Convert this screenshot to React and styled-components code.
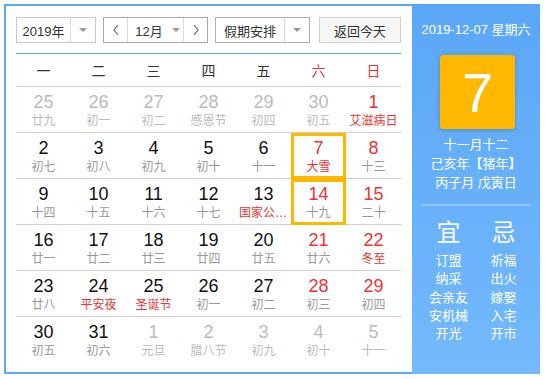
import React from "react";
import styled, { createGlobalStyle } from "styled-components";

const FONT = `"Liberation Sans", "Noto Sans CJK SC", sans-serif`;
const RED = "#ee3333";
const BLUE = "#5ca9f7";

const weekdays = ["一", "二", "三", "四", "五", "六", "日"];

// [day, lunar, other month, festival, selected]
const weeks = [
  [[25, "廿九", 1], [26, "初一", 1], [27, "初二", 1], [28, "感恩节", 1], [29, "初四", 1], [30, "初五", 1], [1, "艾滋病日", 0, 1]],
  [[2, "初七"], [3, "初八"], [4, "初九"], [5, "初十"], [6, "十一"], [7, "大雪", 0, 1, 1], [8, "十三"]],
  [[9, "十四"], [10, "十五"], [11, "十六"], [12, "十七"], [13, "国家公祭日", 0, 1], [14, "十九", 0, 0, 1], [15, "二十"]],
  [[16, "廿一"], [17, "廿二"], [18, "廿三"], [19, "廿四"], [20, "廿五"], [21, "廿六"], [22, "冬至", 0, 1]],
  [[23, "廿八"], [24, "平安夜", 0, 1], [25, "圣诞节", 0, 1], [26, "初一"], [27, "初二"], [28, "初三"], [29, "初四"]],
  [[30, "初五"], [31, "初六"], [1, "元旦", 1], [2, "腊八节", 1], [3, "初九", 1], [4, "初十", 1], [5, "十一", 1]],
];

const good = ["订盟", "纳采", "会亲友", "安机械", "开光"];
const bad = ["祈福", "出火", "嫁娶", "入宅", "开市"];

const GlobalStyle = createGlobalStyle`
  body {
    margin: 0;
    font-family: ${FONT};
    background: #fff;
  }
`;

const Frame = styled.div`
  margin: 4px;
  width: 536px;
  height: 370px;
  box-sizing: border-box;
  border: 2px solid ${BLUE};
  display: flex;
`;

const Main = styled.div`
  width: 406px;
  box-sizing: border-box;
  padding: 11px 11px 0 10px;
`;

const Toolbar = styled.div`
  display: flex;
  height: 26px;
  font-size: 13px;
  color: #333;
`;

const Select = styled.div`
  display: flex;
  width: ${(p) => p.$w}px;
  margin-right: ${(p) => p.$gap || 0}px;
  box-sizing: border-box;
  border: 1px solid ${(p) => p.$border || "#c8c8c8"};
  background: #fff;
`;

const Label = styled.div`
  flex: 1;
  display: flex;
  align-items: center;
  justify-content: center;
`;

const Arrow = styled.div`
  width: ${(p) => p.$w || 24}px;
  display: flex;
  align-items: center;
  justify-content: center;
  border-left: ${(p) => (p.$left ? "1px solid #ddd" : "none")};
  border-right: ${(p) => (p.$right ? "1px solid #ddd" : "none")};
  &::after {
    content: "";
    display: ${(p) => (p.$caret ? "block" : "none")};
    border-left: 4px solid transparent;
    border-right: 4px solid transparent;
    border-top: 4px solid #999;
  }
`;

const MonthLabel = styled(Label)`
  gap: 9px;
  padding-left: 4px;
  &::after {
    content: "";
    border-left: 4px solid transparent;
    border-right: 4px solid transparent;
    border-top: 4px solid #999;
  }
`;

const TodayButton = styled.div`
  margin-left: auto;
  width: 82px;
  box-sizing: border-box;
  border: 1px solid #d0d0d0;
  background: #f6f6f6;
  display: flex;
  align-items: center;
  justify-content: center;
`;

const Grid = styled.div`
  display: grid;
  grid-template-columns: repeat(7, 55px);
`;

const Header = styled(Grid)`
  margin-top: 10px;
  border-top: 1px solid ${BLUE};
  border-bottom: 1px solid #d0d0d0;
  height: 34px;
  box-sizing: border-box;
  padding-bottom: 1px;
`;

const Weekday = styled.div`
  display: flex;
  align-items: center;
  justify-content: center;
  font-size: 14px;
  color: ${(p) => (p.$weekend ? RED : "#333")};
`;

const Week = styled(Grid)`
  height: 46px;
  box-sizing: border-box;
  border-bottom: ${(p) => (p.$last ? "none" : "1px solid #d0d0d0")};
`;

const Day = styled.div`
  box-sizing: border-box;
  border: 3px solid ${(p) => (p.$selected ? "#ffb800" : "transparent")};
  padding-top: 2px;
  text-align: center;
  min-width: 0;
`;

const Num = styled.div`
  font-size: 18px;
  line-height: 20px;
  color: ${(p) => p.$color};
`;

const Lunar = styled.div`
  font-size: 12px;
  line-height: 18px;
  color: ${(p) => p.$color};
  white-space: nowrap;
  overflow: hidden;
  text-overflow: ellipsis;
`;

const Side = styled.div`
  flex: 1;
  margin-right: -2px;
  margin-bottom: -2px;
  margin-top: -2px;
  padding-top: 16px;
  background: linear-gradient(#5aa7f6, #74b9fd);
  color: #fff;
  display: flex;
  flex-direction: column;
  align-items: center;
  font-size: 13px;
`;

const DateLine = styled.div`
  line-height: 20px;
`;

const BigDay = styled.div`
  margin-top: 15px;
  width: 75px;
  height: 74px;
  border-radius: 3px;
  background: #ffb800;
  box-shadow: 0 1px 4px rgba(0, 0, 0, 0.2);
  display: flex;
  align-items: center;
  justify-content: center;
  font-size: 56px;
  margin-left: 3px;
`;

const LunarInfo = styled.div`
  margin-top: 6px;
  line-height: 19px;
  text-align: center;
`;

const Divider = styled.div`
  margin-top: 12px;
  width: 110px;
  height: 2px;
  background: #8ec5fb;
`;

const Advice = styled.div`
  margin-top: 12px;
  display: grid;
  grid-template-columns: 55px 55px;
  text-align: center;
`;

const AdviceTitle = styled.div`
  font-size: 24px;
  line-height: 30px;
  margin-bottom: 4px;
`;

const AdviceItem = styled.div`
  line-height: 18.3px;
`;

const Chevron = ({ dir }) => (
  <svg width="8" height="12" viewBox="0 0 8 12">
    <polyline
      points={dir === "left" ? "6,1 2,6 6,11" : "2,1 6,6 2,11"}
      fill="none"
      stroke="#666"
      strokeWidth="1.2"
    />
  </svg>
);

const dayColor = (d, col) => {
  if (d[2]) return "#bbb";
  if (col >= 5) return RED;
  return "#111";
};

const lunarColor = (d) => {
  if (d[3] && !d[2]) return RED;
  if (d[2]) return "#bbb";
  return "#999";
};

export default function App() {
  return (
    <>
      <GlobalStyle />
      <Frame>
        <Main>
          <Toolbar>
            <Select $w={80} $gap={7}>
              <Label>2019年</Label>
              <Arrow $left $caret />
            </Select>
            <Select $w={105} $gap={7} $border="#a8a8a8">
              <Arrow $w={23} $right>
                <Chevron dir="left" />
              </Arrow>
              <MonthLabel>12月</MonthLabel>
              <Arrow $w={23} $left>
                <Chevron dir="right" />
              </Arrow>
            </Select>
            <Select $w={95} $border="#b0b0b0">
              <Label>假期安排</Label>
              <Arrow $left $caret />
            </Select>
            <TodayButton>返回今天</TodayButton>
          </Toolbar>

          <Header>
            {weekdays.map((w, i) => (
              <Weekday key={w} $weekend={i >= 5}>
                {w}
              </Weekday>
            ))}
          </Header>

          {weeks.map((week, r) => (
            <Week key={r} $last={r === weeks.length - 1}>
              {week.map((d, c) => (
                <Day key={c} $selected={d[4]}>
                  <Num $color={dayColor(d, c)}>{d[0]}</Num>
                  <Lunar $color={lunarColor(d)}>{d[1]}</Lunar>
                </Day>
              ))}
            </Week>
          ))}
        </Main>

        <Side>
          <DateLine>2019-12-07 星期六</DateLine>
          <BigDay>7</BigDay>
          <LunarInfo>
            <div>十一月十二</div>
            <div>己亥年【猪年】</div>
            <div>丙子月 戊寅日</div>
          </LunarInfo>
          <Divider />
          <Advice>
            <div>
              <AdviceTitle>宜</AdviceTitle>
              {good.map((g) => (
                <AdviceItem key={g}>{g}</AdviceItem>
              ))}
            </div>
            <div>
              <AdviceTitle>忌</AdviceTitle>
              {bad.map((b) => (
                <AdviceItem key={b}>{b}</AdviceItem>
              ))}
            </div>
          </Advice>
        </Side>
      </Frame>
    </>
  );
}
